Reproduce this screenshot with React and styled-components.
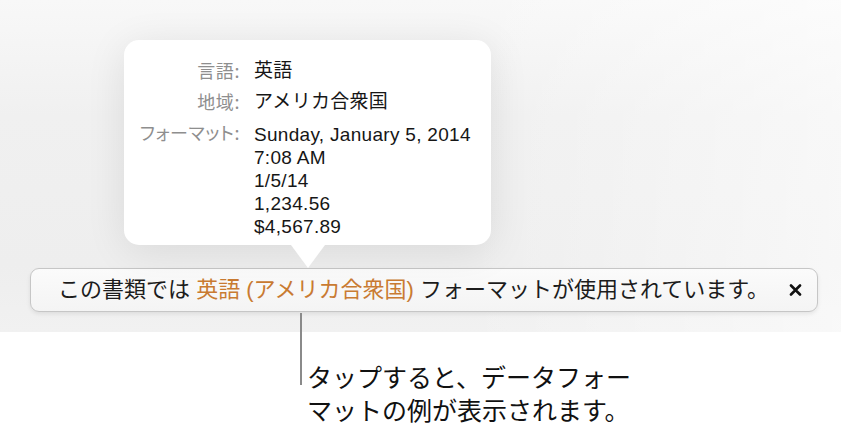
import { Fragment } from "react";
import styled, { createGlobalStyle } from "styled-components";

const GlobalStyle = createGlobalStyle`
  html, body {
    margin: 0;
    padding: 0;
    background: #ffffff;
  }
  body {
    font-family: "Liberation Sans", "Noto Sans CJK JP", sans-serif;
    color: #1a1a1a;
    -webkit-font-smoothing: antialiased;
  }
`;

const Page = styled.div`
  width: 841px;
  height: 434px;
  overflow: hidden;
  background: #ffffff;
`;

const Backdrop = styled.section`
  height: 332px;
  box-sizing: border-box;
  padding-top: 40px;
  display: flex;
  flex-direction: column;
  background:
    linear-gradient(90deg, rgba(255, 255, 255, 0) 55%, rgba(255, 255, 255, 0.55) 100%),
    linear-gradient(180deg, #f8f8f8 0%, #f0f0f0 35%, #eeeeee 80%, #f1f1f1 100%);
`;

const Popover = styled.div`
  position: relative;
  margin-left: 124px;
  width: 367px;
  height: 205px;
  box-sizing: border-box;
  padding: 19px 12px 0 12px;
  background: #ffffff;
  border-radius: 15px;
  box-shadow: 0 6px 40px rgba(0, 0, 0, 0.09);
  display: grid;
  grid-template-columns: 104px auto;
  column-gap: 14px;
  row-gap: 8px;
  align-content: start;

  &::after {
    content: "";
    position: absolute;
    left: 167px;
    top: 100%;
    width: 0;
    height: 0;
    border-left: 17px solid transparent;
    border-right: 17px solid transparent;
    border-top: 23px solid #ffffff;
  }
`;

const Label = styled.div`
  text-align: right;
  font-family: "Noto Sans CJK JP", sans-serif;
  font-feature-settings: "palt";
  font-size: 18px;
  letter-spacing: 0.6px;
  line-height: 23px;
  color: #8e8e8e;
`;

const Value = styled.div`
  font-size: 19px;
  letter-spacing: 0.3px;
  line-height: 23px;
  color: #161616;
  margin-top: ${(p) => (p.$shift ? "2px" : "0")};
`;

const Banner = styled.div`
  margin: 23px 0 0 30px;
  width: 788px;
  height: 44px;
  box-sizing: border-box;
  padding: 0 15px 0 27px;
  display: flex;
  align-items: center;
  justify-content: space-between;
  border: 1px solid #c6c6c6;
  border-radius: 9px;
  background: linear-gradient(180deg, #fbfbfb 0%, #f4f4f4 100%);
  box-shadow: 0 2px 4px rgba(0, 0, 0, 0.08);
`;

const Message = styled.div`
  font-size: 22px;
  line-height: 26px;
  color: #1c1c1c;
  white-space: nowrap;
`;

const Accent = styled.span`
  color: #c97b32;
`;

const Close = styled.button`
  border: none;
  background: none;
  padding: 0;
  width: 14px;
  height: 14px;
  display: flex;
  align-items: center;
  justify-content: center;
  color: #111111;
`;

const Callout = styled.div`
  position: relative;
  margin-top: -19px;
  padding-left: 300px;
  display: flex;
  align-items: flex-start;
`;

const Leader = styled.div`
  width: 2px;
  height: 72px;
  flex-shrink: 0;
  background: #8a8a8a;
`;

const CalloutText = styled.p`
  margin: 47px 0 0 5px;
  font-family: "Noto Sans CJK JP", sans-serif;
  font-size: 25px;
  line-height: 33px;
  color: #111111;
`;

const rows = [
  { label: "言語:", values: ["英語"] },
  { label: "地域:", values: ["アメリカ合衆国"] },
  {
    label: "フォーマット:",
    values: ["Sunday, January 5, 2014", "7:08 AM", "1/5/14", "1,234.56", "$4,567.89"],
    shift: true,
  },
];

export default function App() {
  return (
    <Page>
      <GlobalStyle />
      <Backdrop>
        <Popover>
          {rows.map((row) => (
            <Fragment key={row.label}>
              <Label>{row.label}</Label>
              <Value $shift={row.shift}>
                {row.values.map((v) => (
                  <div key={v}>{v}</div>
                ))}
              </Value>
            </Fragment>
          ))}
        </Popover>
        <Banner>
          <Message>
            この書類では <Accent>英語 (アメリカ合衆国)</Accent> フォーマットが使用されています。
          </Message>
          <Close aria-label="閉じる">
            <svg width="13" height="12" viewBox="0 0 13 12">
              <path d="M2 1.5 L11 10.5 M11 1.5 L2 10.5" stroke="currentColor" strokeWidth="2.6" strokeLinecap="round" />
            </svg>
          </Close>
        </Banner>
      </Backdrop>
      <Callout>
        <Leader />
        <CalloutText>
          タップすると、データフォー
          <br />
          マットの例が表示されます。
        </CalloutText>
      </Callout>
    </Page>
  );
}
